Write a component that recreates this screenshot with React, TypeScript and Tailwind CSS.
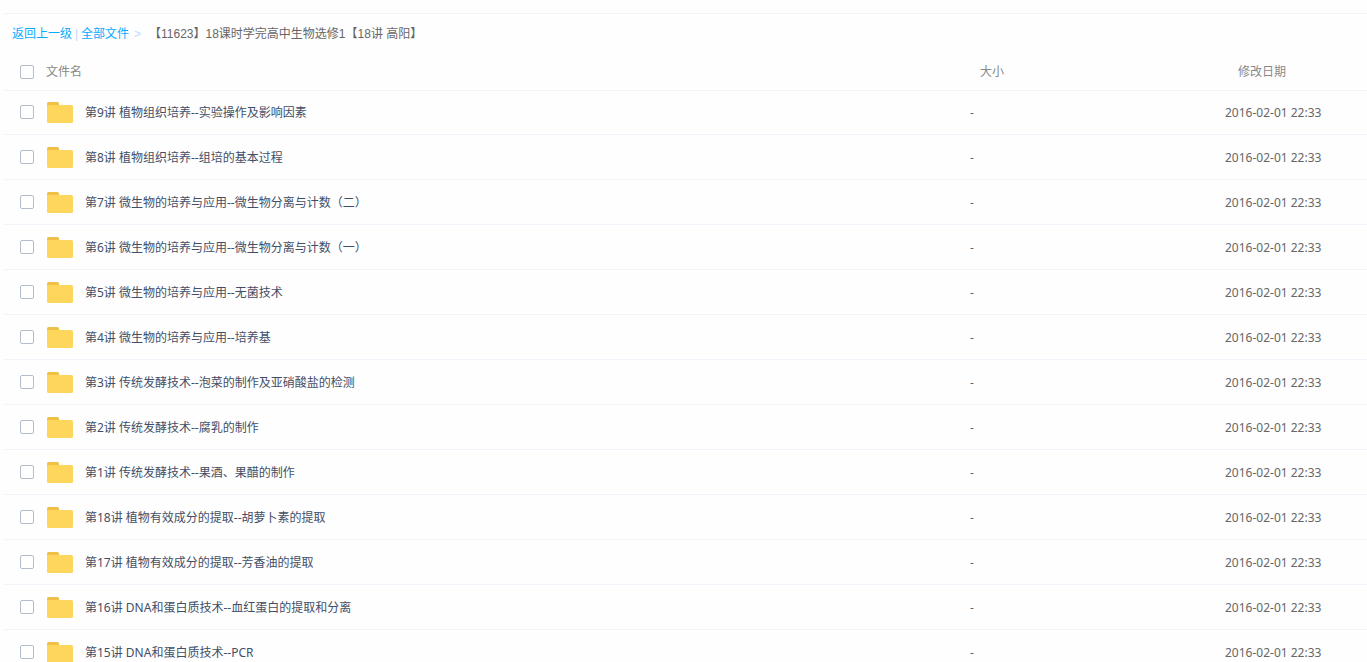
import React from 'react';

const files: string[] = [
  '第9讲 植物组织培养--实验操作及影响因素',
  '第8讲 植物组织培养--组培的基本过程',
  '第7讲 微生物的培养与应用--微生物分离与计数（二）',
  '第6讲 微生物的培养与应用--微生物分离与计数（一）',
  '第5讲 微生物的培养与应用--无菌技术',
  '第4讲 微生物的培养与应用--培养基',
  '第3讲 传统发酵技术--泡菜的制作及亚硝酸盐的检测',
  '第2讲 传统发酵技术--腐乳的制作',
  '第1讲 传统发酵技术--果酒、果醋的制作',
  '第18讲 植物有效成分的提取--胡萝卜素的提取',
  '第17讲 植物有效成分的提取--芳香油的提取',
  '第16讲 DNA和蛋白质技术--血红蛋白的提取和分离',
  '第15讲 DNA和蛋白质技术--PCR',
];

function FolderIcon() {
  return (
    <svg width="26" height="21" viewBox="0 0 26 21" className="shrink-0" aria-hidden="true">
      <path d="M0 5V1.5Q0 0 1.5 0H10.5Q12 0 12 1.5V5Z" fill="#EEC048" />
      <path d="M0 3H24.5Q26 3 26 4.5V19.5Q26 21 24.5 21H1.5Q0 21 0 19.5Z" fill="#FFD65C" />
    </svg>
  );
}

function Checkbox({ label }: { label: string }) {
  return (
    <input
      type="checkbox"
      aria-label={label}
      className="block size-3.5 shrink-0 appearance-none rounded-xs border border-[#b2bdcc] bg-white checked:bg-[#09aaff]"
    />
  );
}

function Breadcrumb() {
  return (
    <nav
      aria-label="路径"
      className="flex h-10 items-center border-t border-[#f2f5f7] pl-2 font-['Liberation_Sans','Noto_Sans_CJK_SC',sans-serif] text-[#666666]"
    >
      <a href="#up" className="text-[#09aaff]">返回上一级</a>
      <span className="w-[9px] text-center text-[#c4dbfe]">|</span>
      <a href="#all" className="text-[#09aaff]">全部文件</a>
      <span className="pr-2 pl-[5px] text-[#c4dbfe]">&gt;</span>
      <span>【11623】18课时学完高中生物选修1【18讲 高阳】</span>
    </nav>
  );
}

export default function App() {
  return (
    <main className="h-screen overflow-hidden bg-[#fefefe] pt-[13px] pl-1 font-['Noto_Sans','Noto_Sans_CJK_SC',sans-serif] text-xs">
      <Breadcrumb />
      <table className="w-full table-fixed border-separate border-spacing-0 text-left">
        <colgroup>
          <col />
          <col className="w-[255px]" />
          <col className="w-[142px]" />
        </colgroup>
        <thead className="text-[#888888]">
          <tr className="h-[38px]">
            <th className="border-b border-[#f2f4f6] p-0 pt-px pl-4 font-normal">
              <div className="flex items-center gap-3">
                <Checkbox label="全选" />
                <span>文件名</span>
              </div>
            </th>
            <th className="border-b border-[#f2f4f6] p-0 pt-px pl-2.5 font-normal">大小</th>
            <th className="border-b border-[#f2f4f6] p-0 pt-px pl-[13px] font-normal">修改日期</th>
          </tr>
        </thead>
        <tbody className="text-[#666666] [&>tr:first-child]:h-11">
          {files.map((name) => (
            <tr key={name} className="h-[45px]">
              <td className="border-b border-[#f0f5fc] p-0 pl-4">
                <div className="flex items-center">
                  <span className="pb-px">
                    <Checkbox label={name} />
                  </span>
                  <span className="pr-3 pl-[13px]">
                    <FolderIcon />
                  </span>
                  <a href="#folder" className="truncate pt-px text-[#424e67]">{name}</a>
                </div>
              </td>
              <td className="border-b border-[#f0f5fc] p-0 pt-px">-</td>
              <td className="border-b border-[#f0f5fc] p-0 pt-px">2016-02-01 22:33</td>
            </tr>
          ))}
        </tbody>
      </table>
    </main>
  );
}
